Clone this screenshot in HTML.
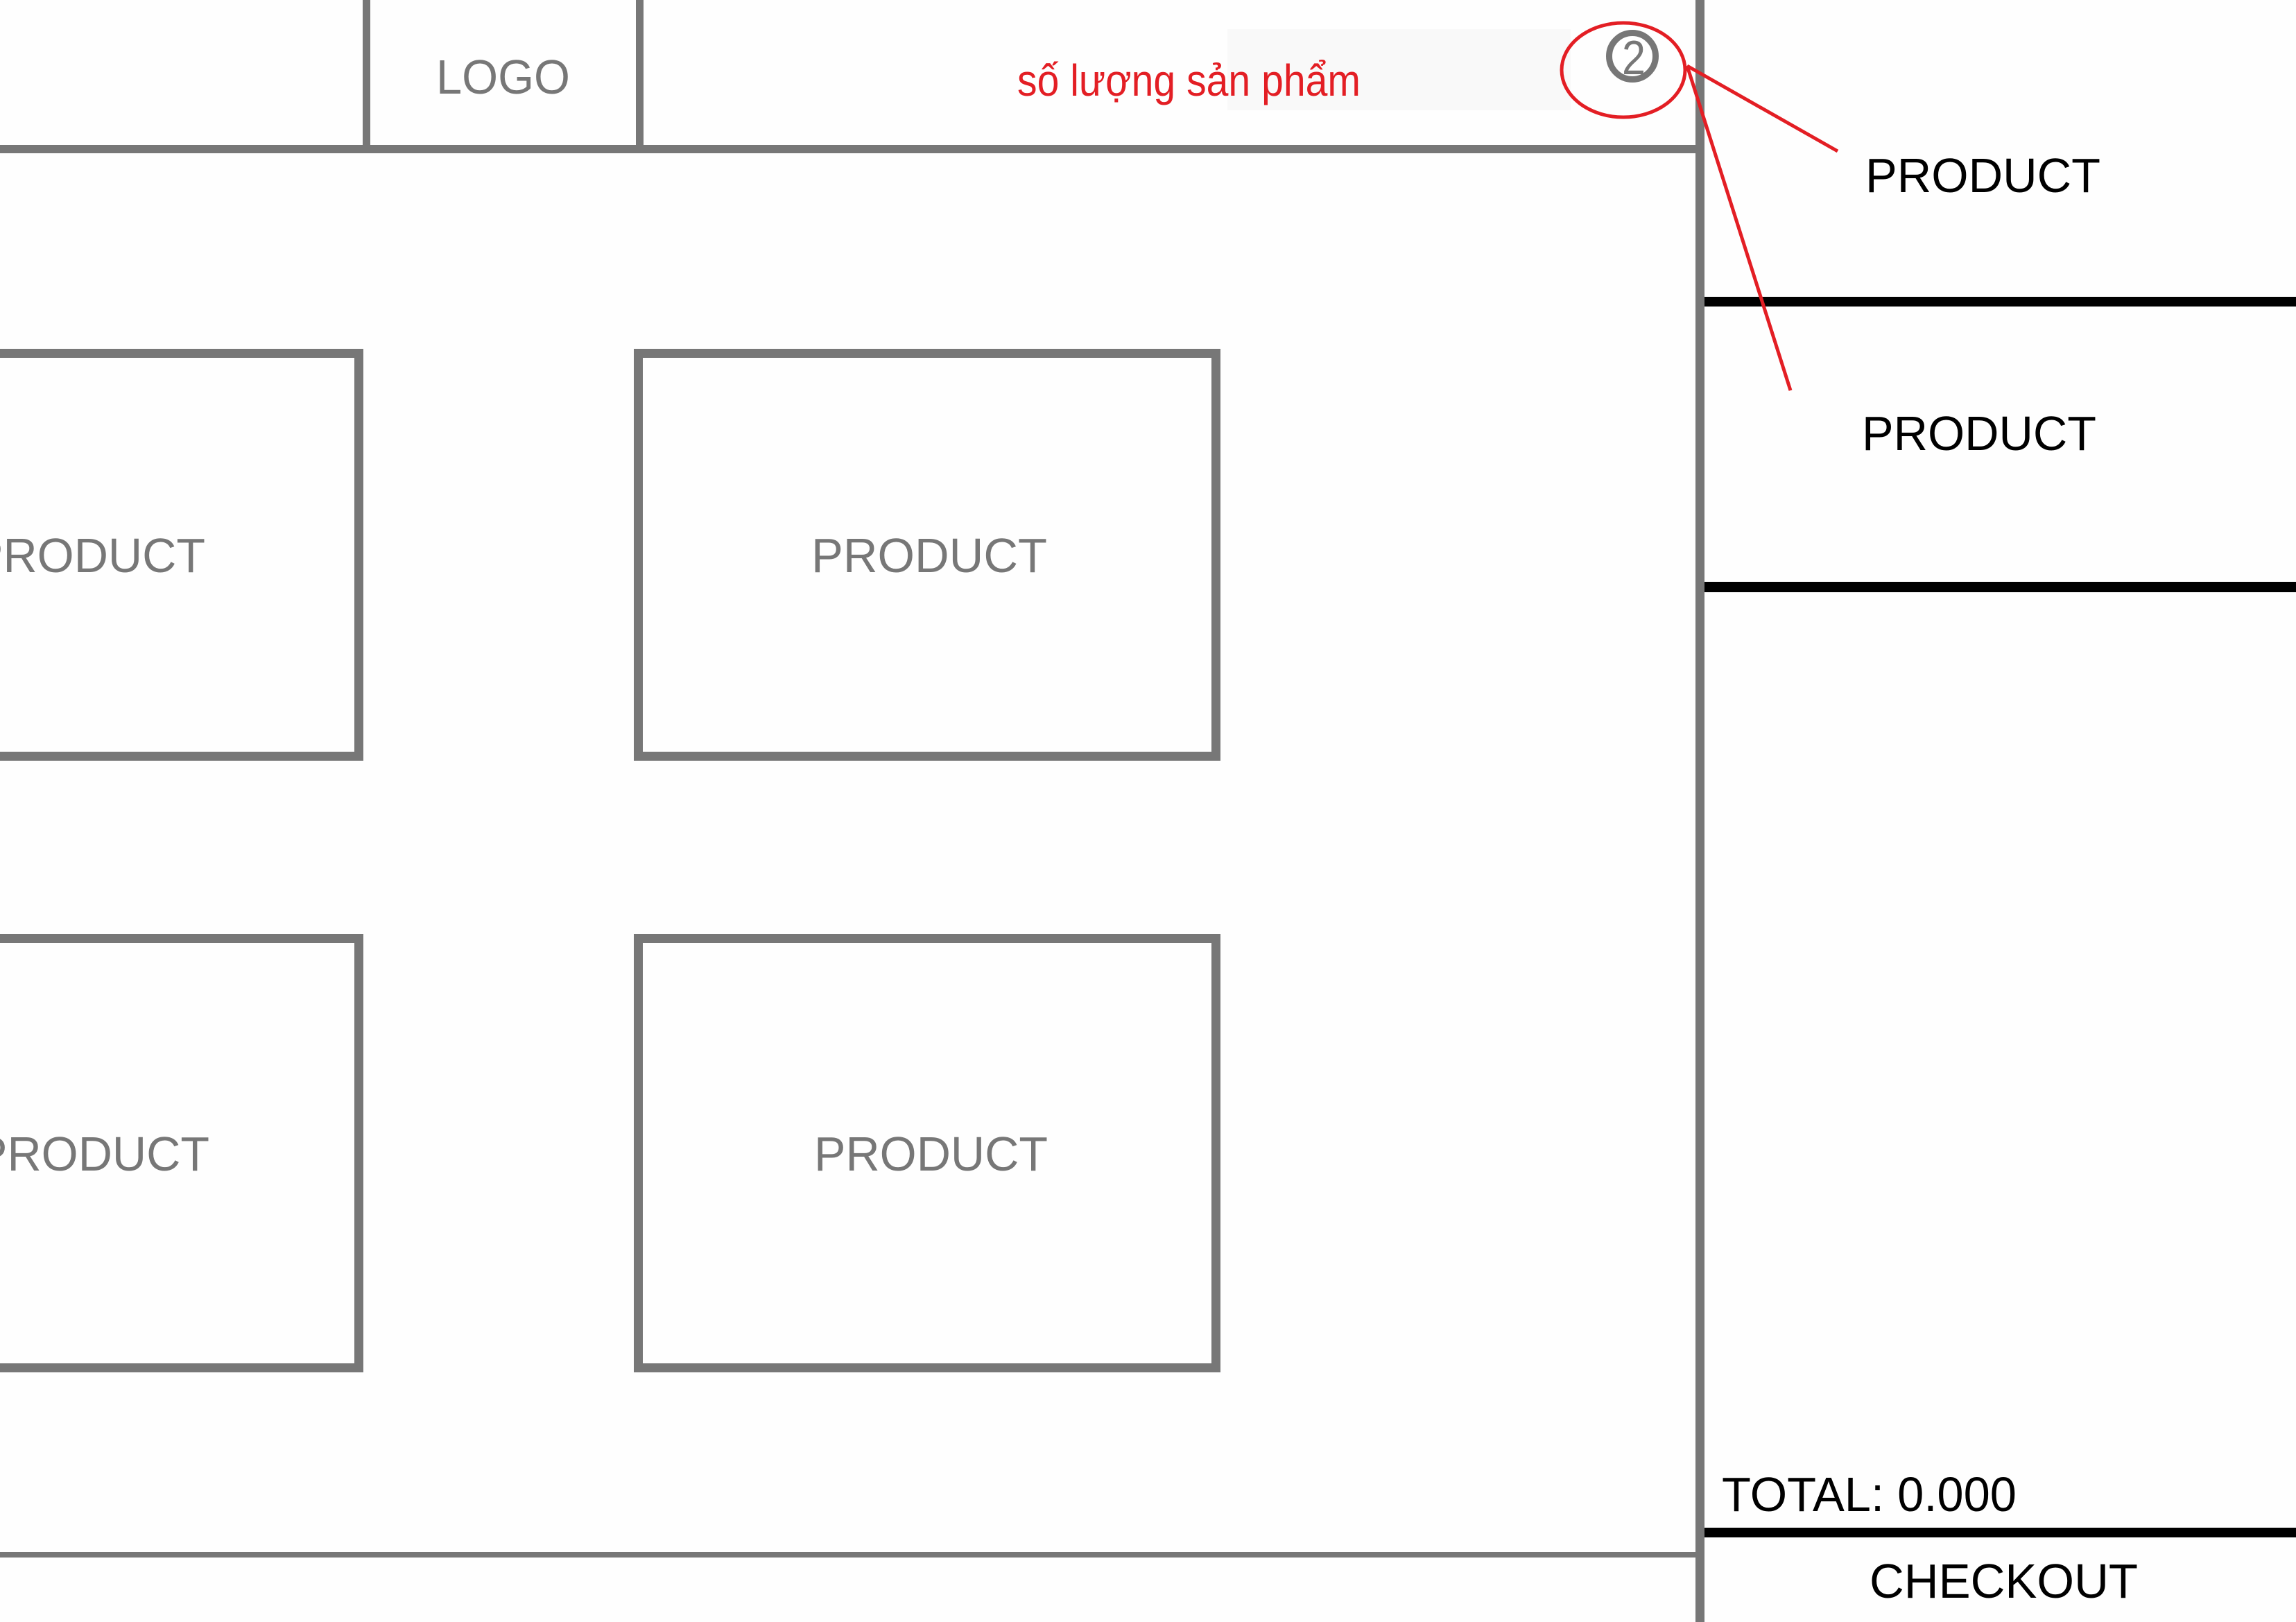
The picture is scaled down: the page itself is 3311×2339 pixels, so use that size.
<!DOCTYPE html>
<html><head><meta charset="utf-8"><style>
html,body{margin:0;padding:0;background:#fff;}
svg{display:block;}
</style></head><body>
<svg width="3311" height="2339" viewBox="0 0 3311 2339" xmlns="http://www.w3.org/2000/svg">
<rect width="3311" height="2339" fill="#fefefe"/>
<rect x="1770" y="42" width="495" height="117" fill="#f9f9f9"/>
<g fill="#777">
<rect x="523" y="0" width="11" height="215"/>
<rect x="917" y="0" width="11" height="215"/>
<rect x="0" y="209" width="2450" height="12"/>
<rect x="2445" y="0" width="13" height="2339"/>
<rect x="0" y="2238" width="2450" height="8"/>
</g>
<g fill="none" stroke="#777" stroke-width="13">
<rect x="920.5" y="509.5" width="833" height="581"/>
<rect x="920.5" y="1353.5" width="833" height="619"/>
<rect x="-300" y="509.5" width="817.5" height="581"/>
<rect x="-300" y="1353.5" width="817.5" height="619"/>
</g>
<g fill="#000">
<rect x="2458" y="428" width="853" height="14"/>
<rect x="2458" y="839" width="853" height="15"/>
<rect x="2458" y="2203" width="853" height="14"/>
</g>
<g font-family="Liberation Sans, Arial, sans-serif" font-size="70">
<text x="629" y="135" fill="#777" textLength="193" lengthAdjust="spacingAndGlyphs">LOGO</text>
<text x="1170" y="825" fill="#777" textLength="340" lengthAdjust="spacingAndGlyphs">PRODUCT</text>
<text x="1174" y="1688" fill="#777" textLength="337" lengthAdjust="spacingAndGlyphs">PRODUCT</text>
<text x="-41" y="825" fill="#777" textLength="337" lengthAdjust="spacingAndGlyphs">PRODUCT</text>
<text x="-35" y="1688" fill="#777" textLength="337" lengthAdjust="spacingAndGlyphs">PRODUCT</text>
<text x="2690" y="277" fill="#000" textLength="339" lengthAdjust="spacingAndGlyphs">PRODUCT</text>
<text x="2685" y="649" fill="#000" textLength="338" lengthAdjust="spacingAndGlyphs">PRODUCT</text>
<text x="2483" y="2179" fill="#000" textLength="425" lengthAdjust="spacingAndGlyphs">TOTAL: 0.000</text>
<text x="2696" y="2304" fill="#000" textLength="387" lengthAdjust="spacingAndGlyphs">CHECKOUT</text>
</g>
<text x="1467" y="138" fill="#e31e24" font-family="Liberation Sans, DejaVu Sans, sans-serif" font-size="64" textLength="495" lengthAdjust="spacingAndGlyphs">số lượng sản phẩm</text>
<circle cx="2354" cy="81" r="33.5" fill="#fff" stroke="#777" stroke-width="9"/>
<text x="2356" y="107" fill="#777" font-family="Liberation Sans, Arial, sans-serif" font-size="70" text-anchor="middle" textLength="34" lengthAdjust="spacingAndGlyphs">2</text>
<g fill="none" stroke="#e31e24" stroke-width="5">
<ellipse cx="2341" cy="101" rx="89" ry="68"/>
<line x1="2433" y1="95" x2="2650" y2="218"/>
<line x1="2433" y1="95" x2="2582" y2="563"/>
</g>
</svg>
</body></html>
